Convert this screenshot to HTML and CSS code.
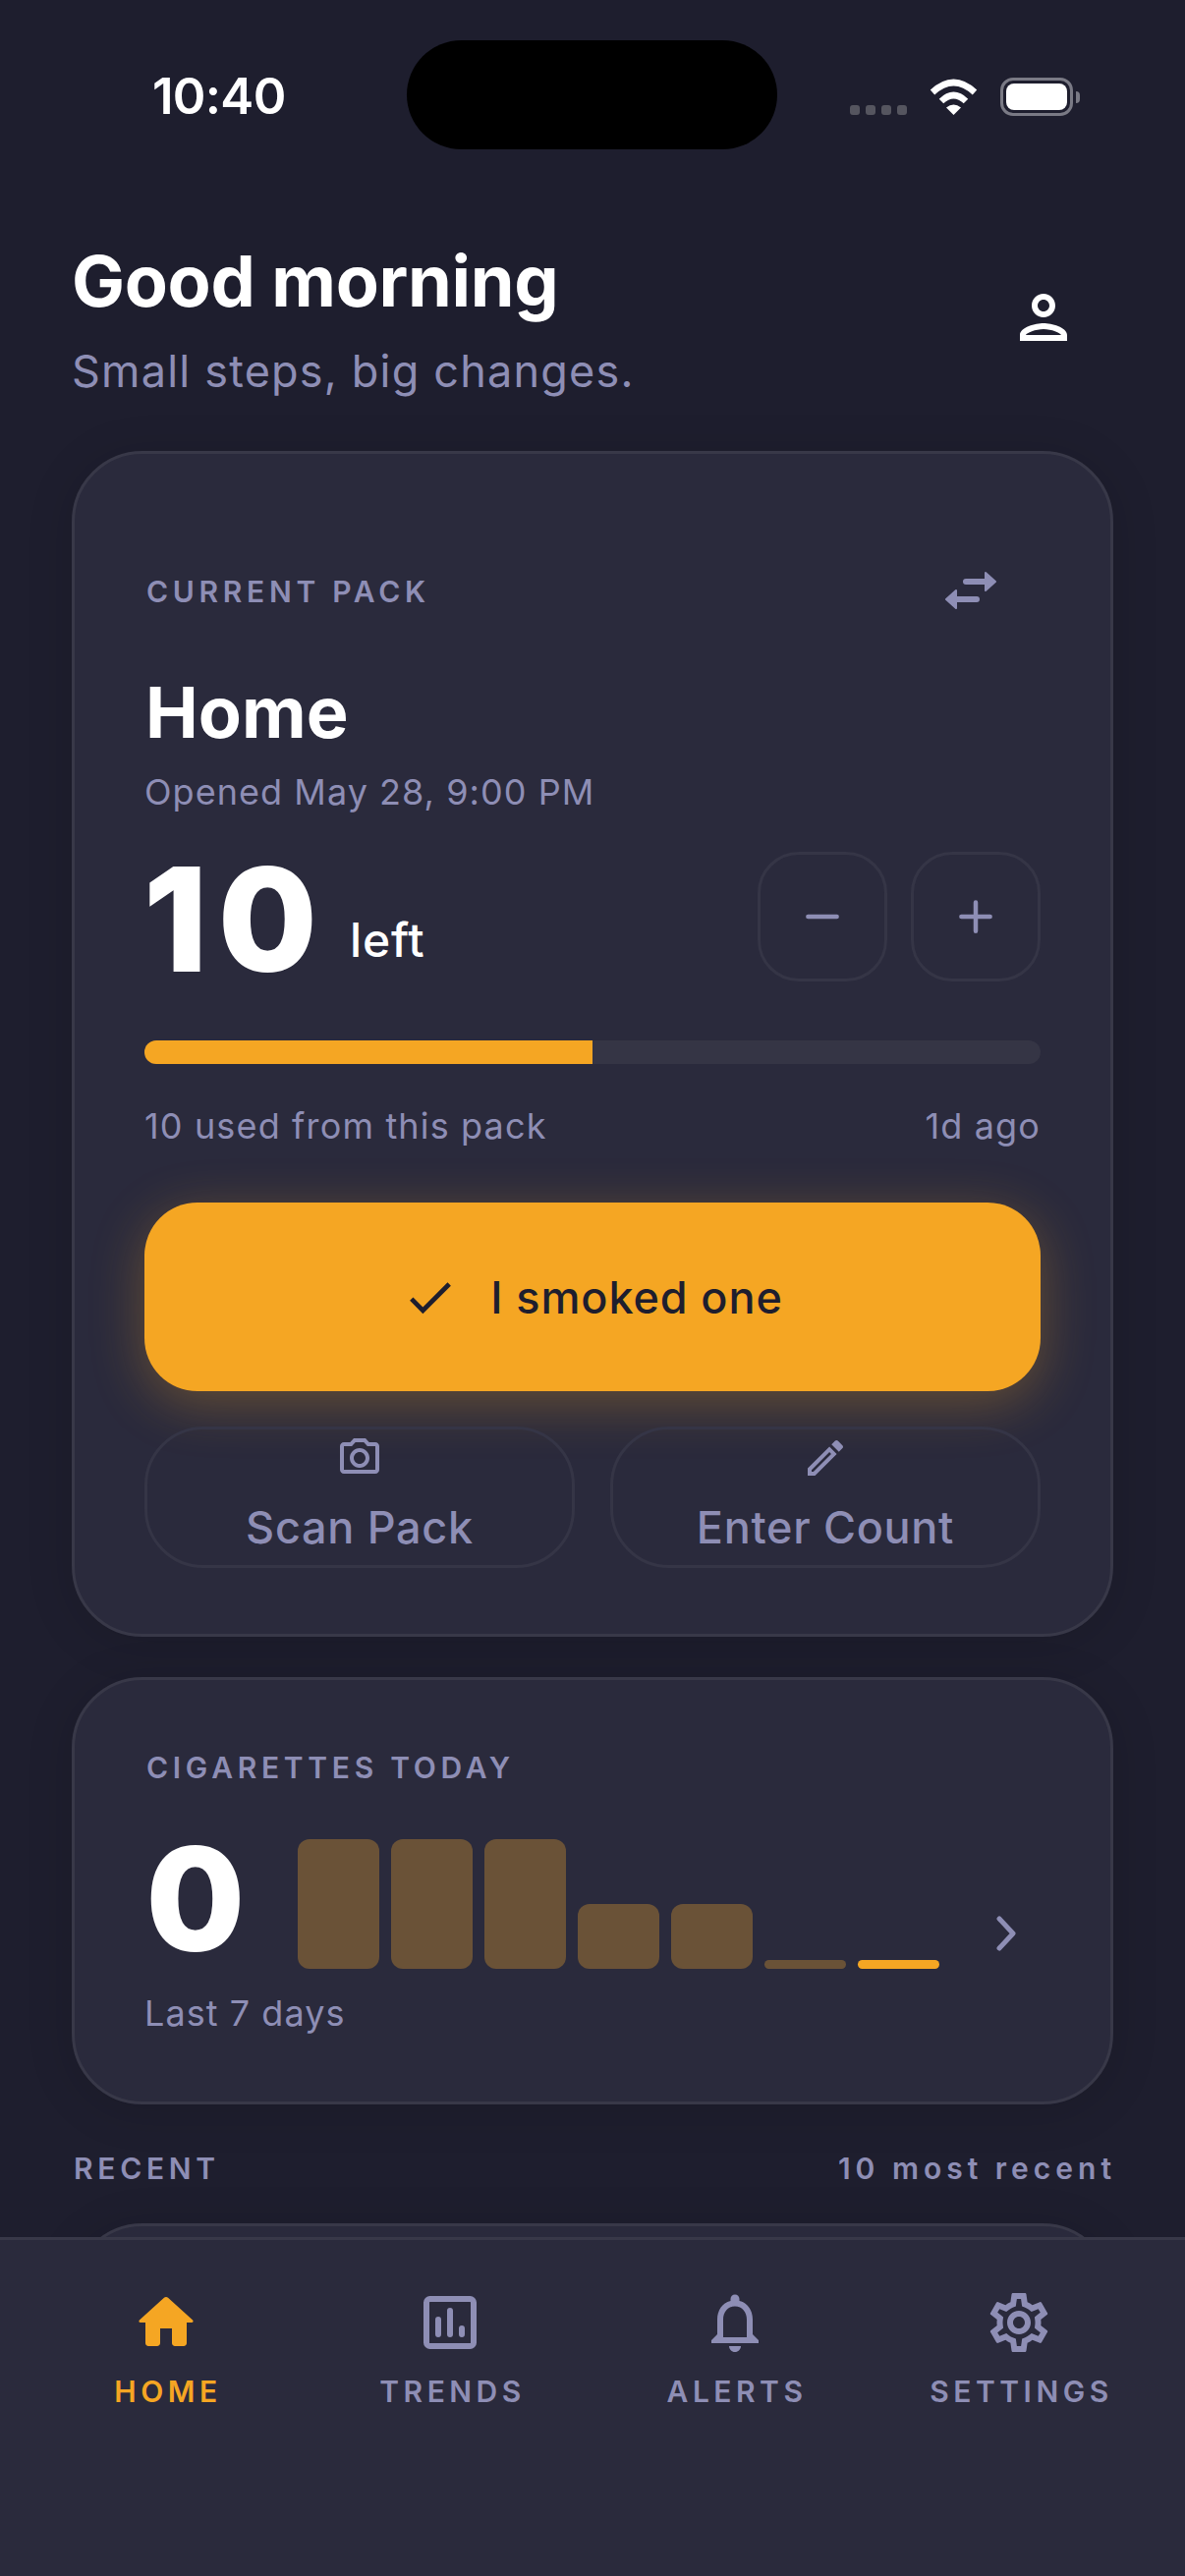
FILE: index.html
```html
<!DOCTYPE html>
<html lang="en">
<head>
<meta charset="UTF-8" />
<title>Home</title>
<meta name="viewport" content="width=device-width,initial-scale=1" />
<link rel="stylesheet" href="styles.css">
</head>
<body>
<div id="app">
  <div class="status-bar">
    <span class="status-time">10:40</span>
    <div class="status-pill"></div>
    <div class="status-icons">
      <div class="signal"><i></i><i></i><i></i><i></i></div>
      <svg class="wifi" viewBox="0 0 51 37">
        <path d="M4 14Q25.5 -6 47 14" fill="none" stroke="#fff" stroke-width="6.5"/>
        <path d="M13 23Q25.5 11 38 23" fill="none" stroke="#fff" stroke-width="6.5"/>
        <path d="M25.5 37L18 29.5Q25.5 23.5 33 29.5Z" fill="#fff"/>
      </svg>
      <div class="battery"><div class="battery-fill"></div></div>
      <div class="battery-nub"></div>
    </div>
  </div>

  <header class="greeting">
    <div>
      <h1>Good morning</h1>
      <p>Small steps, big changes.</p>
    </div>
    <svg class="profile-icon" viewBox="0 0 24 24"><path d="M12 6c1.1 0 2 .9 2 2s-.9 2-2 2-2-.9-2-2 .9-2 2-2m0 10c2.7 0 5.8 1.29 6 2H6c.23-.72 3.31-2 6-2m0-12C9.79 4 8 5.79 8 8s1.79 4 4 4 4-1.79 4-4-1.79-4-4-4zm0 10c-2.67 0-8 1.34-8 4v2h16v-2c0-2.66-5.33-4-8-4z"/></svg>
  </header>

  <section class="card pack-card">
    <div class="pack-top">
      <span class="label">CURRENT PACK</span>
      <svg class="swap-icon" viewBox="0 0 52 38">
        <path d="M21 10H41M32 28H11" fill="none" stroke="#8e8eb5" stroke-width="6" stroke-linecap="round"/>
        <path d="M41 1L51 10L41 19Z M11 19L1 28L11 37Z" fill="#8e8eb5" stroke="#8e8eb5" stroke-width="2" stroke-linejoin="round"/>
      </svg>
    </div>
    <h2 class="pack-name">Home</h2>
    <div class="muted pack-opened">Opened May 28, 9:00 PM</div>
    <div class="count-row">
      <span class="big-number count-number">10</span>
      <span class="count-left">left</span>
      <div class="steppers">
        <button class="step-btn"><svg viewBox="0 0 24 24"><path d="M5.5 12H18.5"/></svg></button>
        <button class="step-btn"><svg viewBox="0 0 24 24"><path d="M5.5 12H18.5M12 5.5V18.5"/></svg></button>
      </div>
    </div>
    <div class="progress"><div class="progress-fill"></div></div>
    <div class="muted pack-meta">
      <span>10 used from this pack</span>
      <span>1d ago</span>
    </div>
    <button class="smoked-btn">
      <svg viewBox="0 0 24 24"><path d="M9 16.17 4.83 12l-1.42 1.41L9 19 21 7l-1.41-1.41z"/></svg>
      <span>I smoked one</span>
    </button>
    <div class="action-row">
      <button class="action-btn">
        <svg viewBox="0 0 24 24"><path d="M20 4h-3.17L15 2H9L7.17 4H4c-1.1 0-2 .9-2 2v12c0 1.1.9 2 2 2h16c1.1 0 2-.9 2-2V6c0-1.1-.9-2-2-2zm0 14H4V6h4.05l1.83-2h4.24l1.83 2H20v12zM12 7c-2.76 0-5 2.24-5 5s2.24 5 5 5 5-2.24 5-5-2.24-5-5-5zm0 8c-1.65 0-3-1.35-3-3s1.35-3 3-3 3 1.35 3 3-1.35 3-3 3z"/></svg>
        <span>Scan Pack</span>
      </button>
      <button class="action-btn">
        <svg viewBox="0 0 24 24"><path d="M3 17.25V21h3.75L17.81 9.94l-3.75-3.75L3 17.25zM5.92 19H5v-.92l9.06-9.06.92.92L5.92 19zM20.71 5.63l-2.34-2.34c-.2-.2-.45-.29-.71-.29s-.51.1-.7.29l-1.83 1.83 3.75 3.75 1.83-1.83c.39-.39.39-1.02 0-1.41z"/></svg>
        <span>Enter Count</span>
      </button>
    </div>
  </section>

  <section class="card today-card">
    <span class="label">CIGARETTES TODAY</span>
    <div class="today-row">
      <span class="big-number today-number">0</span>
      <div class="bars">
        <div class="bar bar-full"></div>
        <div class="bar bar-full"></div>
        <div class="bar bar-full"></div>
        <div class="bar bar-half"></div>
        <div class="bar bar-half"></div>
        <div class="bar bar-min"></div>
        <div class="bar bar-min bar-current"></div>
      </div>
      <svg class="chevron" viewBox="0 0 24 36"><path d="M5 3L19 18L5 33"/></svg>
    </div>
    <div class="muted today-caption">Last 7 days</div>
  </section>

  <div class="recent-head">
    <span class="label">RECENT</span>
    <span class="label recent-count">10 most recent</span>
  </div>
  <section class="card recent-card"></section>

  <nav class="tabbar">
    <div class="tab tab-active">
      <svg viewBox="0 0 24 24"><path d="M10 19v-5h4v5c0 .55.45 1 1 1h3c.55 0 1-.45 1-1v-7h1.7c.46 0 .68-.57.33-.87L12.67 3.6c-.38-.34-.96-.34-1.34 0l-8.36 7.53c-.34.3-.13.87.33.87H5v7c0 .55.45 1 1 1h3c.55 0 1-.45 1-1z"/></svg>
      <span>HOME</span>
    </div>
    <div class="tab">
      <svg viewBox="0 0 24 24"><rect x="4" y="4" width="16" height="16" rx="1.2" fill="none" stroke="currentColor" stroke-width="2"/><path d="M8 11V16M12 8V16M16 14V16" fill="none" stroke="currentColor" stroke-width="2" stroke-linecap="round"/></svg>
      <span>TRENDS</span>
    </div>
    <div class="tab">
      <svg viewBox="0 0 24 24"><path d="M12 22c1.1 0 2-.9 2-2h-4c0 1.1.9 2 2 2zm6-6v-5c0-3.07-1.63-5.64-4.5-6.32V4c0-.83-.67-1.5-1.5-1.5s-1.5.67-1.5 1.5v.68C7.64 5.36 6 7.92 6 11v5l-2 2v1h16v-1l-2-2zm-2 1H8v-6c0-2.48 1.51-4.5 4-4.5s4 2.02 4 4.5v6z"/></svg>
      <span>ALERTS</span>
    </div>
    <div class="tab">
      <svg viewBox="0 0 24 24"><path d="M19.43 12.98c.04-.32.07-.64.07-.98 0-.34-.03-.66-.07-.98l2.11-1.65c.19-.15.24-.42.12-.64l-2-3.46c-.09-.16-.26-.25-.44-.25-.06 0-.12.01-.17.03l-2.49 1c-.52-.4-1.08-.73-1.69-.98l-.38-2.65C14.46 2.18 14.25 2 14 2h-4c-.25 0-.46.18-.49.42l-.38 2.65c-.61.25-1.17.59-1.69.98l-2.49-1c-.06-.02-.12-.03-.18-.03-.17 0-.34.09-.43.25l-2 3.46c-.13.22-.07.49.12.64l2.11 1.65c-.04.32-.07.65-.07.98 0 .33.03.66.07.98l-2.11 1.65c-.19.15-.24.42-.12.64l2 3.46c.09.16.26.25.44.25.06 0 .12-.01.17-.03l2.49-1c.52.4 1.08.73 1.69.98l.38 2.65c.03.24.24.42.49.42h4c.25 0 .46-.18.49-.42l.38-2.65c.61-.25 1.17-.59 1.69-.98l2.49 1c.06.02.12.03.18.03.17 0 .34-.09.43-.25l2-3.46c.12-.22.07-.49-.12-.64l-2.11-1.65zm-1.98-1.71c.04.31.05.52.05.73 0 .21-.02.43-.05.73l-.14 1.13.89.7 1.08.84-.7 1.21-1.27-.51-1.04-.42-.9.68c-.43.32-.84.56-1.25.73l-1.06.43-.16 1.13-.2 1.35h-1.4l-.19-1.35-.16-1.13-1.06-.43c-.43-.18-.83-.41-1.23-.71l-.91-.7-1.06.43-1.27.51-.7-1.21 1.08-.84.89-.7-.14-1.13c-.03-.31-.05-.54-.05-.74s.02-.43.05-.73l.14-1.13-.89-.7-1.08-.84.7-1.21 1.27.51 1.04.42.9-.68c.43-.32.84-.56 1.25-.73l1.06-.43.16-1.13.2-1.35h1.39l.19 1.35.16 1.13 1.06.43c.43.18.83.41 1.23.71l.91.7 1.06-.43 1.27-.51.7 1.21-1.07.85-.89.7.14 1.13zM12 8c-2.21 0-4 1.79-4 4s1.79 4 4 4 4-1.79 4-4-1.79-4-4-4zm0 6c-1.1 0-2-.9-2-2s.9-2 2-2 2 .9 2 2-.9 2-2 2z"/></svg>
      <span>SETTINGS</span>
    </div>
  </nav>
</div>
</body>
</html>
```

FILE: styles.css
```css
:root {
  --bg: #1e1e2e;
  --card: #2a2a3c;
  --border: #383848;
  --line: #353546;
  --accent: #f5a623;
  --muted: #8e8eb5;
  --white: #fff;
}
html, body {
  margin: 0;
  padding: 0;
  background: var(--bg);
  color: var(--white);
  font-family: 'Inter', 'Liberation Sans', sans-serif;
}
#app {
  position: relative;
  width: 1206px;
  height: 2622px;
  overflow: hidden;
  box-sizing: border-box;
  display: flex;
  flex-direction: column;
}
h1, h2, p {
  margin: 0;
}
button {
  font-family: inherit;
  background: none;
  border: none;
  padding: 0;
}

/* Status bar */
.status-bar {
  flex: none;
  height: 111px;
  margin-top: 41px;
  display: flex;
  align-items: center;
}
.status-time {
  width: 133px;
  margin-left: 155px;
  font-size: 51px;
  line-height: 60px;
  font-weight: 600;
  letter-spacing: -0.7px;
  margin-top: 2px;
}
.status-pill {
  width: 377px;
  height: 111px;
  margin-left: 126px;
  border-radius: 56px;
  background: #000;
}
.status-icons {
  display: flex;
  align-items: flex-end;
  margin-left: 74px;
  height: 39px;
  margin-top: 4px;
}
.signal {
  display: flex;
  gap: 6px;
  margin-bottom: 1px;
}
.signal i {
  width: 10px;
  height: 10px;
  border-radius: 3px;
  background: #55555f;
}
.wifi {
  width: 51px;
  height: 37px;
  margin-left: 22px;
  margin-bottom: 1px;
}
.battery {
  width: 74px;
  height: 39px;
  margin-left: 22px;
  box-sizing: border-box;
  border: 3px solid #7a7a85;
  border-radius: 13px;
  padding: 3px;
}
.battery-fill {
  height: 100%;
  border-radius: 8px;
  background: var(--white);
}
.battery-nub {
  width: 4px;
  height: 12px;
  margin: 0 0 13px 3px;
  border-radius: 0 4px 4px 0;
  background: #7a7a85;
}

/* Greeting */
.greeting {
  flex: none;
  margin-top: 92px;
  padding: 0 108px 0 73px;
  display: flex;
  justify-content: space-between;
  align-items: center;
}
.greeting h1 {
  font-size: 72px;
  line-height: 84px;
  font-weight: 700;
  letter-spacing: -0.3px;
}
.greeting p {
  margin-top: 23px;
  margin-bottom: -3px;
  font-size: 45px;
  line-height: 54px;
  letter-spacing: 1.2px;
  color: var(--muted);
}
.profile-icon {
  width: 72px;
  height: 72px;
  fill: var(--white);
  margin-top: -1px;
}

/* Cards */
.card {
  flex: none;
  box-sizing: border-box;
  margin: 0 73px;
  background: var(--card);
  border: 3px solid var(--border);
  border-radius: 72px;
  box-shadow: 0 6px 48px rgba(0,0,0,0.14);
}
.label {
  font-size: 30px;
  line-height: 40px;
  font-weight: 600;
  letter-spacing: 4.7px;
  color: var(--muted);
}
.muted {
  font-size: 36px;
  line-height: 48px;
  letter-spacing: 1.05px;
  color: var(--muted);
}
.big-number {
  font-size: 144px;
  line-height: 132px;
  font-weight: 850;
  -webkit-text-stroke: 2px var(--white);
}

/* Current pack */
.pack-card {
  margin-top: 57px;
  padding: 120px 71px 67px 71px;
}
.pack-top {
  display: flex;
  justify-content: space-between;
  align-items: center;
  height: 40px;
}
.pack-top .label {
  margin-left: 2px;
}
.swap-icon {
  width: 52px;
  height: 38px;
  margin-right: 45px;
  margin-top: -3px;
}
.pack-name {
  margin-top: 61px;
  margin-left: 1px;
  font-size: 72px;
  line-height: 84px;
  font-weight: 700;
}
.pack-opened {
  margin-top: 15px;
}
.count-row {
  margin-top: 37px;
  height: 132px;
  display: flex;
  align-items: center;
}
.count-number {
  width: 180px;
  margin-top: 6px;
  letter-spacing: 12px;
}
.count-left {
  margin-left: 29px;
  margin-top: 47px;
  font-size: 48px;
  font-weight: 500;
  letter-spacing: 0.8px;
}
.steppers {
  margin-left: auto;
  display: flex;
  gap: 24px;
}
.step-btn {
  width: 132px;
  height: 132px;
  box-sizing: border-box;
  border: 3px solid var(--line);
  border-radius: 42px;
  display: flex;
  align-items: center;
  justify-content: center;
}
.step-btn svg {
  width: 54px;
  height: 54px;
  fill: none;
  stroke: var(--muted);
  stroke-width: 2;
  stroke-linecap: round;
}
.progress {
  margin-top: 60px;
  height: 24px;
  border-radius: 12px;
  background: #353545;
  overflow: hidden;
}
.progress-fill {
  width: 50%;
  height: 100%;
  background: var(--accent);
}
.pack-meta {
  margin-top: 39px;
  display: flex;
  justify-content: space-between;
  letter-spacing: 1.15px;
}
.smoked-btn {
  width: 100%;
  height: 192px;
  margin-top: 54px;
  border-radius: 54px;
  background: var(--accent);
  color: #1e1e2e;
  font-size: 45px;
  font-weight: 500;
  letter-spacing: 0.9px;
  display: flex;
  align-items: center;
  justify-content: center;
  gap: 33px;
  box-shadow: 0 12px 54px rgba(245,166,35,0.3);
}
.smoked-btn svg {
  width: 57px;
  height: 57px;
  fill: #1e1e2e;
}
.action-row {
  position: relative;
  margin-top: 36px;
  display: flex;
  gap: 36px;
}
.action-btn {
  flex: 1;
  height: 144px;
  box-sizing: border-box;
  border: 3px solid var(--line);
  border-radius: 60px;
  color: var(--muted);
  font-size: 45px;
  line-height: 54px;
  font-weight: 500;
  letter-spacing: 0.7px;
  display: flex;
  flex-direction: column;
  align-items: center;
  padding-top: 5px;
  gap: 20px;
}
.action-btn svg {
  flex: none;
  width: 48px;
  height: 48px;
  fill: var(--muted);
}

/* Today */
.today-card {
  margin-top: 41px;
  padding: 69px 71px 66px 71px;
}
.today-card .label {
  display: block;
  margin-left: 2px;
}
.today-row {
  margin-top: 53px;
  height: 132px;
  display: flex;
  align-items: flex-end;
}
.today-number {
  width: 154px;
  padding-left: 2px;
  margin-bottom: 5px;
}
.bars {
  display: flex;
  align-items: flex-end;
  gap: 12px;
  height: 132px;
}
.bar {
  width: 83px;
  border-radius: 12px;
  background: #6a5237;
}
.bar-full {
  height: 132px;
}
.bar-half {
  height: 66px;
}
.bar-min {
  height: 9px;
}
.bar-current {
  background: var(--accent);
}
.chevron {
  width: 24px;
  height: 36px;
  margin-left: auto;
  margin-right: 23px;
  margin-bottom: 18px;
  fill: none;
  stroke: var(--muted);
  stroke-width: 5;
  stroke-linecap: round;
  stroke-linejoin: round;
}
.today-caption {
  margin-top: 21px;
}

/* Recent */
.recent-head {
  flex: none;
  margin: 45px 70px 0 75px;
  display: flex;
  justify-content: space-between;
}
.recent-count {
  letter-spacing: 5px;
}
.recent-card {
  margin-top: 36px;
  height: 300px;
}

/* Tab bar, sits over the scrolling list */
.tabbar {
  position: absolute;
  left: 0;
  right: 0;
  bottom: 0;
  height: 345px;
  box-sizing: border-box;
  padding: 48px 24px 0 24px;
  background: var(--card);
  border-top: 3px solid var(--border);
  display: flex;
}
.tab {
  flex: 1;
  display: flex;
  flex-direction: column;
  align-items: center;
  color: var(--muted);
}
.tab svg {
  width: 72px;
  height: 72px;
  fill: currentColor;
}
.tab span {
  margin-top: 16px;
  margin-left: 4.5px;
  font-size: 30px;
  line-height: 36px;
  font-weight: 600;
  letter-spacing: 4.5px;
}
.tab-active {
  color: var(--accent);
}
```
